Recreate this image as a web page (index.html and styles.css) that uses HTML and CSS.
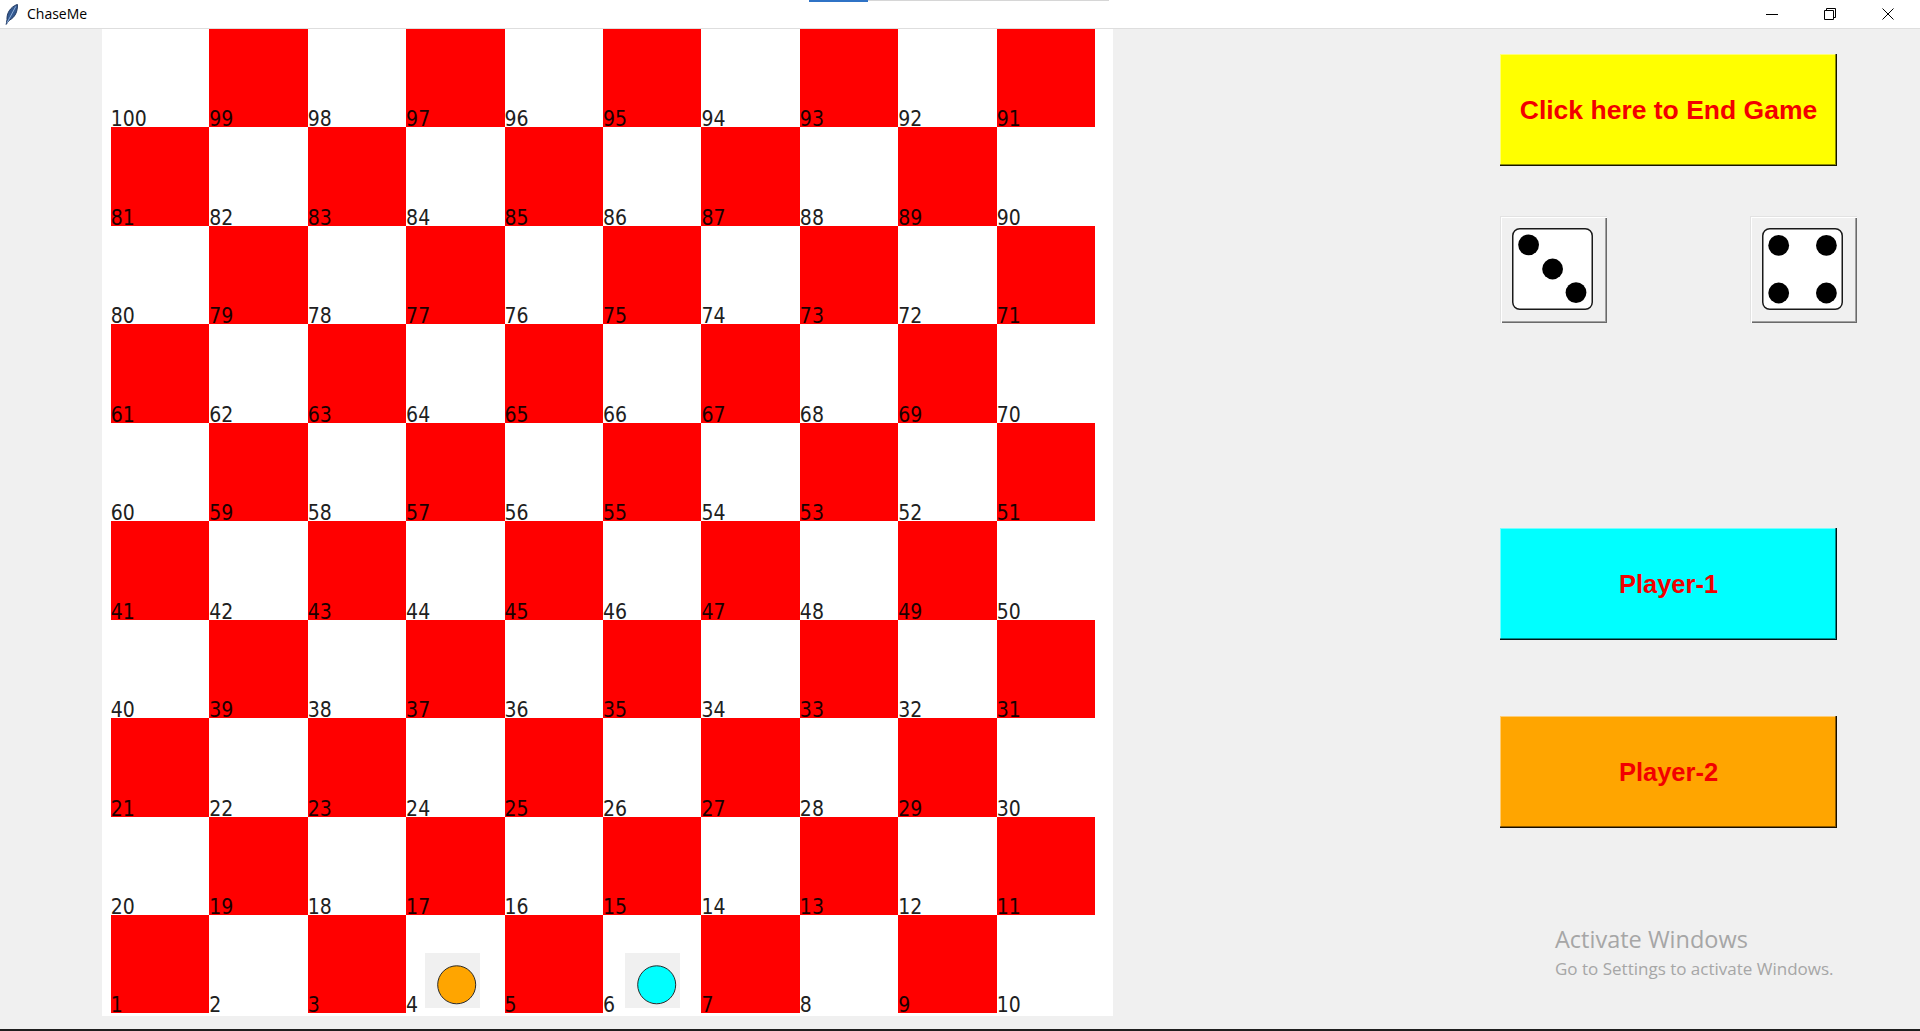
FILE: index.html
```html
<!DOCTYPE html>
<html lang="en">
<head>
<meta charset="utf-8">
<title>ChaseMe</title>
<link rel="stylesheet" href="styles.css">
</head>
<body>
<div class="window">
  <div class="titlebar">
    <div class="loadline"><span class="load-blue"></span><span class="load-gray"></span></div>
    <svg class="feather" width="13" height="21" viewBox="0 0 13 21">
      <path d="M1.2 20.4 L2 15.6 C1.6 9.6 5 3 12.4 0.4 C12.8 7.4 10 13.6 4 16.4 Z" fill="#34598f" stroke="#1f3761" stroke-width="1"/>
      <path d="M1.8 19.2 L10.8 2.4" stroke="#8fb0dc" stroke-width="1" fill="none"/>
    </svg>
    <span class="title">ChaseMe</span>
    <div class="controls">
      <div class="ctl"><svg width="12" height="12" viewBox="0 0 12 12"><path d="M0 6.5 H12" stroke="#000" stroke-width="1"/></svg></div>
      <div class="ctl"><svg width="12" height="12" viewBox="0 0 12 12"><path d="M0.5 2.5 H9.5 V11.5 H0.5 Z" stroke="#000" fill="none"/><path d="M2.5 2.5 V0.5 H11.5 V9.5 H9.5" stroke="#000" fill="none"/></svg></div>
      <div class="ctl"><svg width="12" height="12" viewBox="0 0 12 12"><path d="M0.5 0.5 L11.5 11.5 M11.5 0.5 L0.5 11.5" stroke="#000" stroke-width="1"/></svg></div>
    </div>
  </div>

  <div class="main">
    <div class="canvas">
      <div class="board">
        <div class="sq">100</div><div class="sq red">99</div><div class="sq">98</div><div class="sq red">97</div><div class="sq">96</div><div class="sq red">95</div><div class="sq">94</div><div class="sq red">93</div><div class="sq">92</div><div class="sq red">91</div>
        <div class="sq red">81</div><div class="sq">82</div><div class="sq red">83</div><div class="sq">84</div><div class="sq red">85</div><div class="sq">86</div><div class="sq red">87</div><div class="sq">88</div><div class="sq red">89</div><div class="sq">90</div>
        <div class="sq">80</div><div class="sq red">79</div><div class="sq">78</div><div class="sq red">77</div><div class="sq">76</div><div class="sq red">75</div><div class="sq">74</div><div class="sq red">73</div><div class="sq">72</div><div class="sq red">71</div>
        <div class="sq red">61</div><div class="sq">62</div><div class="sq red">63</div><div class="sq">64</div><div class="sq red">65</div><div class="sq">66</div><div class="sq red">67</div><div class="sq">68</div><div class="sq red">69</div><div class="sq">70</div>
        <div class="sq">60</div><div class="sq red">59</div><div class="sq">58</div><div class="sq red">57</div><div class="sq">56</div><div class="sq red">55</div><div class="sq">54</div><div class="sq red">53</div><div class="sq">52</div><div class="sq red">51</div>
        <div class="sq red">41</div><div class="sq">42</div><div class="sq red">43</div><div class="sq">44</div><div class="sq red">45</div><div class="sq">46</div><div class="sq red">47</div><div class="sq">48</div><div class="sq red">49</div><div class="sq">50</div>
        <div class="sq">40</div><div class="sq red">39</div><div class="sq">38</div><div class="sq red">37</div><div class="sq">36</div><div class="sq red">35</div><div class="sq">34</div><div class="sq red">33</div><div class="sq">32</div><div class="sq red">31</div>
        <div class="sq red">21</div><div class="sq">22</div><div class="sq red">23</div><div class="sq">24</div><div class="sq red">25</div><div class="sq">26</div><div class="sq red">27</div><div class="sq">28</div><div class="sq red">29</div><div class="sq">30</div>
        <div class="sq">20</div><div class="sq red">19</div><div class="sq">18</div><div class="sq red">17</div><div class="sq">16</div><div class="sq red">15</div><div class="sq">14</div><div class="sq red">13</div><div class="sq">12</div><div class="sq red">11</div>
        <div class="sq red">1</div><div class="sq">2</div><div class="sq red">3</div><div class="sq">4</div><div class="sq red">5</div><div class="sq">6</div><div class="sq red">7</div><div class="sq">8</div><div class="sq red">9</div><div class="sq">10</div>
      </div>
      <div class="token token-p2"><svg width="55" height="55" viewBox="0 0 55 55"><circle cx="31.7" cy="31.8" r="19" fill="#ffa500" stroke="#2a2a2a" stroke-width="1"/></svg></div>
      <div class="token token-p1"><svg width="55" height="55" viewBox="0 0 55 55"><circle cx="31.7" cy="31.8" r="19" fill="#00ffff" stroke="#2a2a2a" stroke-width="1"/></svg></div>
    </div>

    <div class="panel">
      <div class="btn btn-end">Click here to End Game</div>
      <div class="dice">
        <div class="die">
          <svg width="81" height="82" viewBox="0 0 81 82">
            <rect x="0.75" y="0.75" width="79.5" height="80.5" rx="7" fill="#fff" stroke="#1a1a1a" stroke-width="1.5"/>
            <circle cx="16.6" cy="16.8" r="10.4" fill="#000"/>
            <circle cx="40.6" cy="41" r="10.4" fill="#000"/>
            <circle cx="64" cy="64.6" r="10.4" fill="#000"/>
          </svg>
        </div>
        <div class="die">
          <svg width="81" height="82" viewBox="0 0 81 82">
            <rect x="0.75" y="0.75" width="79.5" height="80.5" rx="7" fill="#fff" stroke="#1a1a1a" stroke-width="1.5"/>
            <circle cx="16.7" cy="17.4" r="10.4" fill="#000"/>
            <circle cx="64.4" cy="17.4" r="10.4" fill="#000"/>
            <circle cx="16.7" cy="65" r="10.4" fill="#000"/>
            <circle cx="64.4" cy="65" r="10.4" fill="#000"/>
          </svg>
        </div>
      </div>
      <div class="btn btn-p1">Player-1</div>
      <div class="btn btn-p2">Player-2</div>
    </div>
  </div>
  <div class="taskbar"></div>

  <div class="watermark">
    <div class="wm-title">Activate Windows</div>
    <div class="wm-sub">Go to Settings to activate Windows.</div>
  </div>
</div>
</body>
</html>
```

FILE: styles.css
```css
* { box-sizing: border-box; }

html, body {
  margin: 0;
  padding: 0;
  width: 1920px;
  height: 1031px;
  overflow: hidden;
  background: #f0f0f0;
}

.window {
  position: relative;
  width: 1920px;
  height: 1031px;
  display: flex;
  flex-direction: column;
}

/* Title bar */
.titlebar {
  position: relative;
  height: 29px;
  flex: 0 0 29px;
  background: #ffffff;
  border-bottom: 1px solid #dedede;
  display: flex;
  align-items: center;
}

.loadline {
  position: absolute;
  top: 0;
  left: 809px;
  display: flex;
  height: 2px;
}
.load-blue { width: 59px; height: 2px; background: #2f73c6; }
.load-gray { width: 241px; height: 1px; background: #d6d6d6; }

.feather {
  margin-left: 5px;
  margin-top: 1px;
  flex: none;
}

.title {
  margin-left: 9px;
  font-family: "Open Sans", "Noto Sans", sans-serif;
  font-size: 14px;
  color: #000;
  line-height: 1;
}

.controls {
  margin-left: auto;
  margin-right: 3px;
  display: flex;
  height: 28px;
}
.ctl {
  width: 58px;
  height: 28px;
  display: flex;
  align-items: center;
  justify-content: center;
}
.ctl svg { display: block; }

/* Main area */
.main {
  flex: 1 1 auto;
  display: flex;
  padding-left: 102px;
}

.canvas {
  position: relative;
  width: 1011px;
  height: 987px;
  flex: none;
  background: #ffffff;
  padding-left: 8.8px;
}

.board {
  display: grid;
  grid-template-columns: repeat(10, 98.45px);
  grid-template-rows: repeat(10, 98.45px);
}

.sq {
  display: flex;
  align-items: flex-end;
  font-family: "DejaVu Sans Condensed", "DejaVu Sans", sans-serif;
  font-stretch: condensed;
  font-size: 21px;
  line-height: 15px;
  color: #202020;
  background: #ffffff;
  overflow: visible;
}
.sq.red { background: #ff0000; color: #1a0000; }

.token {
  position: absolute;
  top: 924px;
  width: 55px;
  height: 55px;
  background: #f0f0f0;
}
.token svg { display: block; }
.token-p2 { left: 323px; }
.token-p1 { left: 523px; }

/* Right panel */
.panel {
  display: flex;
  flex-direction: column;
  padding-left: 387px;
  padding-top: 25px;
}

.btn {
  width: 337px;
  height: 112px;
  display: flex;
  align-items: center;
  justify-content: center;
  font-family: "Liberation Sans", Arial, sans-serif;
  font-weight: bold;
  font-size: 26.5px;
  color: #f20000;
  box-shadow:
    inset -1px -1px 0 rgba(0, 0, 0, 0.85),
    inset -2px -2px 0 rgba(0, 0, 0, 0.45),
    inset 1px 1px 0 rgba(255, 255, 255, 0.45);
}
.btn-end { background: #ffff00; }
.btn-p1 { background: #00ffff; margin-top: 205px; font-size: 25.5px; }
.btn-p2 { background: #ffa500; margin-top: 76px; font-size: 25.5px; }

.dice {
  margin-top: 50px;
  width: 357px;
  display: flex;
  justify-content: space-between;
}

.die {
  width: 107px;
  height: 107px;
  background: #f0f0f0;
  padding: 12px 0 0 12px;
  box-shadow:
    inset 1px 1px 0 #e2e2e2,
    inset 2px 2px 0 #ffffff,
    inset -1px -1px 0 #6a6a6a,
    inset -2px -2px 0 #a0a0a0;
}
.die svg { display: block; }

.taskbar {
  flex: 0 0 2px;
  height: 2px;
  background: #1e1e1e;
}

/* Windows activation watermark overlay */
.watermark {
  position: absolute;
  left: 1555px;
  top: 926px;
  font-family: "Open Sans", "Noto Sans", sans-serif;
  color: #a6a6a6;
}
.wm-title {
  font-size: 23.5px;
  line-height: 27px;
}
.wm-sub {
  font-size: 17px;
  line-height: 24px;
  margin-top: 4px;
}
```
